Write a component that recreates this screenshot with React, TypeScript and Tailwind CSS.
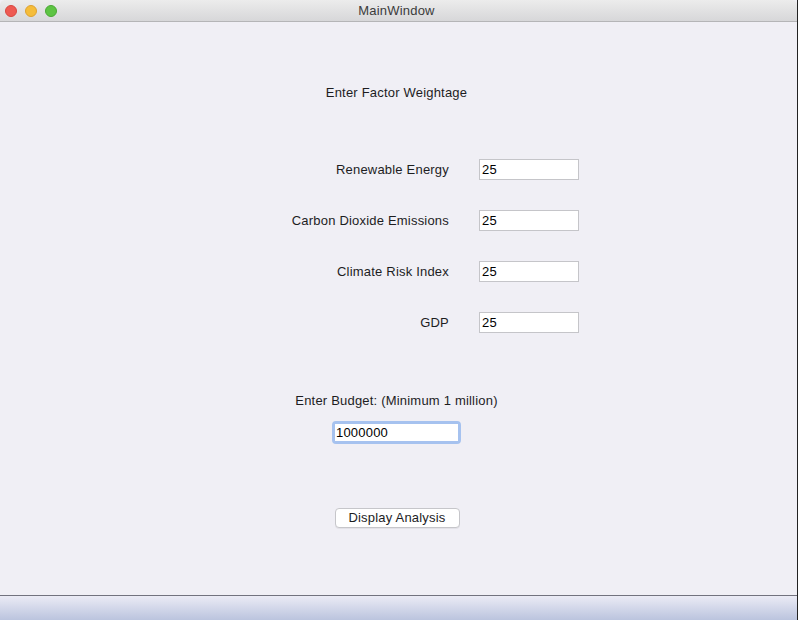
const factors = [
  { label: 'Renewable Energy', value: '25' },
  { label: 'Carbon Dioxide Emissions', value: '25' },
  { label: 'Climate Risk Index', value: '25' },
  { label: 'GDP', value: '25' },
];

function TrafficLights() {
  return (
    <div className="absolute left-[5px] top-[5px] flex gap-[8px]">
      <span className="block h-[12px] w-[12px] rounded-full bg-[#ee5a52] border border-[#d8473f]" />
      <span className="block h-[12px] w-[12px] rounded-full bg-[#f5bd3a] border border-[#dea22f]" />
      <span className="block h-[12px] w-[12px] rounded-full bg-[#5dc443] border border-[#49a834]" />
    </div>
  );
}

export default function App() {
  return (
    <div
      className="w-[798px] h-[620px] flex flex-col bg-[#f0eff5] text-[13px] tracking-[0.2px] text-[#1d1d1f] border-r border-[#222] overflow-hidden"
      style={{ fontFamily: '"Liberation Sans", Arial, sans-serif' }}
    >
      {/* title bar */}
      <div className="relative h-[22px] shrink-0 flex items-center justify-center pr-[4px] bg-gradient-to-b from-[#ececec] to-[#d7d7d9] border-b border-[#b5b5b7] rounded-tl-[5px] rounded-tr-[5px]">
        <TrafficLights />
        <span className="text-[13px] text-[#3b3b3b]">MainWindow</span>
      </div>

      {/* content */}
      <div className="flex-1 flex flex-col">
        <div className="mt-[63px] h-[16px] leading-[16px] text-center pr-[4px]">Enter Factor Weightage</div>

        <div className="mt-[58px] flex flex-col gap-[30px]">
          {factors.map((f) => (
            <div key={f.label} className="flex items-center pl-[200px] h-[21px]">
              <span className="w-[249px] text-right leading-[16px]">{f.label}</span>
              <input
                readOnly
                value={f.value}
                className="ml-[30px] w-[100px] h-[21px] bg-white border border-[#c5c5c9] px-[2px] text-[13px] text-black outline-none"
                style={{ fontFamily: '"Liberation Sans", Arial, sans-serif' }}
              />
            </div>
          ))}
        </div>

        <div className="mt-[60px] h-[16px] leading-[16px] text-center pr-[4px]">Enter Budget: (Minimum 1 million)</div>

        <div className="mt-[12px] flex justify-center">
          <div className="ml-[-4px] rounded-[4px] border-[3px] border-[#a6c2ef] bg-white">
            <input
              readOnly
              value="1000000"
              className="block w-[123px] h-[17px] bg-white px-[1px] text-[13px] text-black outline-none"
              style={{ fontFamily: '"Liberation Sans", Arial, sans-serif' }}
            />
          </div>
        </div>

        <div className="mt-[64px] flex justify-center">
          <button className="ml-[-3px] w-[125px] h-[20px] rounded-[4px] bg-white border border-[#c6c6ca] text-[13px] leading-[18px] text-[#1d1d1f] shadow-[0_1px_0_rgba(0,0,0,0.05)]">
            Display Analysis
          </button>
        </div>
      </div>

      {/* bottom bar */}
      <div className="h-[25px] shrink-0 border-t border-[#72727e] bg-gradient-to-b from-[#ebebf5] to-[#bbc4de]" />
    </div>
  );
}
